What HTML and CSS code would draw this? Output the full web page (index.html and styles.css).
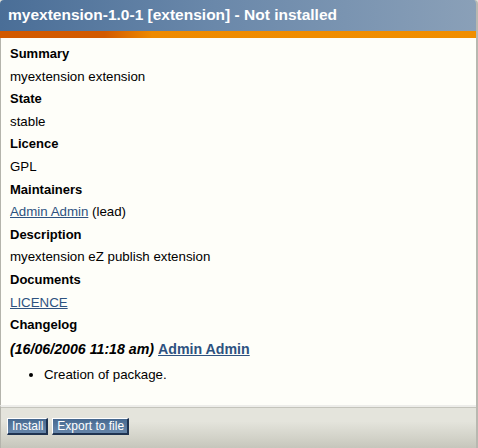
FILE: index.html
```html
<!DOCTYPE html>
<html>
<head>
<meta charset="utf-8">
<link rel="stylesheet" href="styles.css">
</head>
<body>
<div class="box">
  <div class="box-header">
    <h1 class="title">myextension-1.0-1 [extension] - Not installed</h1>
  </div>
  <div class="accent"></div>
  <div class="content">
    <div class="label">Summary</div>
    <div class="value">myextension extension</div>
    <div class="label">State</div>
    <div class="value">stable</div>
    <div class="label">Licence</div>
    <div class="value">GPL</div>
    <div class="label">Maintainers</div>
    <div class="value"><a href="#" class="link">Admin Admin</a> (lead)</div>
    <div class="label">Description</div>
    <div class="value">myextension eZ publish extension</div>
    <div class="label">Documents</div>
    <div class="value"><a href="#" class="link">LICENCE</a></div>
    <div class="label">Changelog</div>
    <div class="entry"><span class="date">(16/06/2006 11:18 am)</span> <a href="#" class="link strong">Admin Admin</a></div>
    <ul class="changes">
      <li>Creation of package.</li>
    </ul>
  </div>
  <div class="footer">
    <button class="btn">Install</button>
    <button class="btn">Export to file</button>
  </div>
</div>
</body>
</html>
```
FILE: styles.css
```css
html, body {
  margin: 0;
  padding: 0;
  background: #e2e2da;
}
body {
  width: 478px;
  height: 448px;
  overflow: hidden;
  font-family: "Liberation Sans", Arial, sans-serif;
  font-size: 13px;
  color: #000;
}
.box {
  width: 476px;
  height: 448px;
  display: flex;
  flex-direction: column;
  border-right: 2px solid #b8b8b0;
  border-radius: 4px 4px 0 0;
  overflow: hidden;
}
.box-header {
  height: 31px;
  background: linear-gradient(to right, #4a6e97 0%, #6a88aa 45%, #8aa0b8 100%);
  display: flex;
  align-items: center;
  padding-left: 8px;
}
.title {
  margin: 0 0 1px 0;
  font-size: 15.5px;
  font-weight: bold;
  color: #fff;
  line-height: 1;
}
.accent {
  height: 7px;
  background: linear-gradient(to right, #d25900 0%, #d25a00 22%, #ee8a00 32%, #f08e00 100%);
}
.content {
  flex: 1;
  background: #fefef9;
  border-left: 1px solid #b4b4ac;
  padding: 5px 0 0 9px;
}
.label {
  font-weight: bold;
  line-height: 22.6px;
}
.value {
  font-size: 13.3px;
  line-height: 22.6px;
}
.link {
  color: #2d5280;
  text-decoration: underline;
}
.strong {
  font-weight: bold;
}
.entry {
  margin-top: 0;
  font-size: 14.2px;
  line-height: 24px;
}
.date {
  font-weight: bold;
  font-style: italic;
}
.changes {
  margin: 3px 0 0 0;
  padding-left: 34px;
  font-size: 13.3px;
  line-height: 22px;
}
.footer {
  height: 43px;
  flex: none;
  border-top: 2px solid #ededea;
  box-shadow: inset 0 1px 0 #c4c4bc;
  background: linear-gradient(to bottom, #e4e4dc 0%, #e4e4dc 35%, #d0d0c6 80%, #c6c6bc 100%);
  border-left: 1px solid #b4b4ac;
  display: flex;
  align-items: flex-start;
  gap: 4px;
  padding: 11px 0 0 6px;
  box-sizing: border-box;
}
.btn {
  height: 17px;
  margin: 0;
  padding: 0 3px 0 4px;
  font-family: "Liberation Sans", Arial, sans-serif;
  font-size: 12px;
  color: #fff;
  background: linear-gradient(to bottom, #46688f 0%, #5b7ca1 60%, #6584a8 100%);
  border-style: solid;
  border-width: 1px 2px 2px 1px;
  border-color: #ffffff #1f3350 #1f3350 #ffffff;
  line-height: 14px;
  cursor: pointer;
}
```
